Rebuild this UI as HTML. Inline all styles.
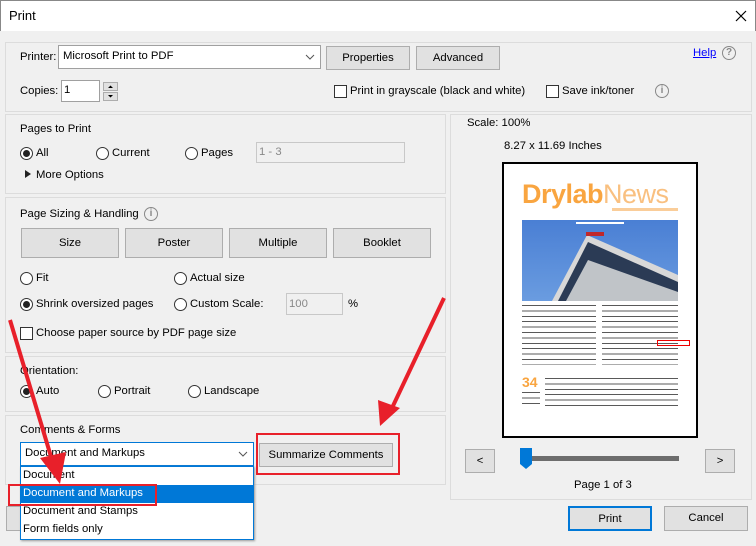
<!DOCTYPE html>
<html><head><style>
*{margin:0;padding:0;box-sizing:border-box}
body{width:756px;height:546px;background:#f0f0f0;font-family:"Liberation Sans",sans-serif;font-size:11.3px;color:#000;position:relative;overflow:hidden}
.a{position:absolute}
.p{position:absolute;border:1px solid #dcdcdc;background:#f0f0f0}
.btn{position:absolute;background:#e1e1e1;border:1px solid #adadad;text-align:center;font-size:11.3px}
.rad{position:absolute;width:13px;height:13px;border:1px solid #333;border-radius:50%;background:#fff}
.rad.on::after{content:"";position:absolute;left:2px;top:2px;width:7px;height:7px;border-radius:50%;background:#222}
.chk{position:absolute;width:13px;height:13px;border:1px solid #333;background:#fff}
.inp{position:absolute;background:#fff;border:1px solid #a0a0a0}
.dis{position:absolute;background:#f0f0f0;border:1px solid #c8c8c8;color:#888;padding-left:2px}
.t{position:absolute;white-space:nowrap}
.lines{position:absolute;background:repeating-linear-gradient(#222 0 1px,#fff 1px 3px,#fff 3px 5.4px);opacity:.75}
.ic{position:absolute;width:14px;height:14px;border:1.5px solid #888;border-radius:50%;color:#888;font-size:10px;text-align:center;line-height:11px;font-weight:bold}
</style></head><body>
<div class="a" style="left:0;top:0;width:756px;height:31px;background:#fff;border-left:1px solid #888;border-top:1px solid #888;border-right:1px solid #888"></div>
<div class="t" style="left:9px;top:8px;font-size:13px">Print</div>
<svg class="a" style="left:735px;top:10px" width="12" height="12"><path d="M1 1L11 11M11 1L1 11" stroke="#000" stroke-width="1.2"/></svg>

<div class="p" style="left:5px;top:42px;width:747px;height:70px"></div>
<div class="t" style="left:20px;top:51px">Printer:</div>
<div class="inp" style="left:58px;top:45px;width:263px;height:24px"></div>
<div class="t" style="left:63px;top:50px">Microsoft Print to PDF</div>
<svg class="a" style="left:305px;top:53px" width="10" height="8"><path d="M1 2L5 6L9 2" stroke="#555" fill="none"/></svg>
<div class="btn" style="left:326px;top:46px;width:84px;height:24px;line-height:22px">Properties</div>
<div class="btn" style="left:416px;top:46px;width:84px;height:24px;line-height:22px">Advanced</div>
<div class="t" style="left:693px;top:47px;color:#00f;text-decoration:underline">Help</div>
<div class="ic" style="left:722px;top:46px">?</div>
<div class="t" style="left:20px;top:85px">Copies:</div>
<div class="inp" style="left:61px;top:80px;width:39px;height:22px"></div>
<div class="t" style="left:64px;top:84px">1</div>
<div class="btn" style="left:103px;top:82px;width:15px;height:9px"></div>
<div class="btn" style="left:103px;top:92px;width:15px;height:9px"></div>
<svg class="a" style="left:106px;top:84px" width="9" height="16"><path d="M2 4L4.5 1.5L7 4Z M2 11L4.5 13.5L7 11Z" fill="#000"/></svg>
<div class="chk" style="left:334px;top:85px"></div>
<div class="t" style="left:350px;top:85px">Print in grayscale (black and white)</div>
<div class="chk" style="left:546px;top:85px"></div>
<div class="t" style="left:562px;top:85px">Save ink/toner</div>
<div class="ic" style="left:655px;top:84px">i</div>

<div class="p" style="left:5px;top:114px;width:441px;height:80px"></div>
<div class="t" style="left:20px;top:123px">Pages to Print</div>
<div class="rad on" style="left:20px;top:147px"></div><div class="t" style="left:36px;top:147px">All</div>
<div class="rad" style="left:96px;top:147px"></div><div class="t" style="left:112px;top:147px">Current</div>
<div class="rad" style="left:185px;top:147px"></div><div class="t" style="left:201px;top:147px">Pages</div>
<div class="dis" style="left:256px;top:142px;width:149px;height:21px;line-height:19px">1 - 3</div>
<svg class="a" style="left:25px;top:170px" width="6" height="8"><path d="M0 0L6 4L0 8Z" fill="#222"/></svg>
<div class="t" style="left:36px;top:169px">More Options</div>

<div class="p" style="left:5px;top:197px;width:441px;height:156px"></div>
<div class="t" style="left:20px;top:208px">Page Sizing &amp; Handling</div>
<div class="ic" style="left:144px;top:207px">i</div>
<div class="btn" style="left:21px;top:228px;width:98px;height:30px;line-height:28px">Size</div>
<div class="btn" style="left:125px;top:228px;width:98px;height:30px;line-height:28px">Poster</div>
<div class="btn" style="left:229px;top:228px;width:98px;height:30px;line-height:28px">Multiple</div>
<div class="btn" style="left:333px;top:228px;width:98px;height:30px;line-height:28px">Booklet</div>
<div class="rad" style="left:20px;top:272px"></div><div class="t" style="left:36px;top:272px">Fit</div>
<div class="rad" style="left:174px;top:272px"></div><div class="t" style="left:190px;top:272px">Actual size</div>
<div class="rad on" style="left:20px;top:298px"></div><div class="t" style="left:36px;top:298px">Shrink oversized pages</div>
<div class="rad" style="left:174px;top:298px"></div><div class="t" style="left:190px;top:298px">Custom Scale:</div>
<div class="dis" style="left:286px;top:293px;width:57px;height:22px;line-height:20px">100</div>
<div class="t" style="left:348px;top:298px">%</div>
<div class="chk" style="left:20px;top:327px"></div><div class="t" style="left:36px;top:327px">Choose paper source by PDF page size</div>

<div class="p" style="left:5px;top:356px;width:441px;height:56px"></div>
<div class="t" style="left:20px;top:365px">Orientation:</div>
<div class="rad on" style="left:20px;top:385px"></div><div class="t" style="left:36px;top:385px">Auto</div>
<div class="rad" style="left:98px;top:385px"></div><div class="t" style="left:114px;top:385px">Portrait</div>
<div class="rad" style="left:188px;top:385px"></div><div class="t" style="left:204px;top:385px">Landscape</div>

<div class="p" style="left:5px;top:415px;width:441px;height:70px"></div>
<div class="t" style="left:20px;top:424px">Comments &amp; Forms</div>
<div class="a" style="left:20px;top:442px;width:234px;height:24px;border:1px solid #0078d7;background:#fff"></div>
<div class="t" style="left:25px;top:447px">Document and Markups</div>
<svg class="a" style="left:238px;top:450px" width="10" height="8"><path d="M1 2L5 6L9 2" stroke="#555" fill="none"/></svg>
<div class="btn" style="left:259px;top:443px;width:134px;height:24px;line-height:22px">Summarize Comments</div>
<div class="btn" style="left:6px;top:506px;width:40px;height:25px"></div>
<div class="a" style="left:20px;top:466px;width:234px;height:74px;background:#fff;border:1px solid #0078d7;box-shadow:1px 1px 2px #999"></div>
<div class="t" style="left:23px;top:469px">Document</div>
<div class="a" style="left:21px;top:485px;width:232px;height:18px;background:#0078d7"></div>
<div class="t" style="left:23px;top:487px;color:#fff">Document and Markups</div>
<div class="t" style="left:23px;top:505px">Document and Stamps</div>
<div class="t" style="left:23px;top:523px">Form fields only</div>

<div class="p" style="left:450px;top:114px;width:302px;height:386px"></div>
<div class="t" style="left:467px;top:117px">Scale: 100%</div>
<div class="t" style="left:504px;top:140px">8.27 x 11.69 Inches</div>
<div class="a" style="left:502px;top:162px;width:196px;height:276px;background:#fff;border:2px solid #000"></div>
<div class="t" style="left:522px;top:179px;font-size:27px;font-weight:bold;color:#f9a540;letter-spacing:-0.5px">Drylab<span style="font-weight:normal;color:#f9c080">News</span></div>
<div class="a" style="left:612px;top:208px;width:66px;height:3px;background:#f9c080;opacity:.8"></div>
<div class="a" style="left:522px;top:220px;width:156px;height:81px;background:linear-gradient(#4a7fd4,#6a9ce0)"></div>
<svg class="a" style="left:522px;top:220px" width="156" height="81"><path d="M30 81L65 15L156 55L156 81Z" fill="#d8d8d8"/><path d="M36 81L66 22L156 62L156 81Z" fill="#2b3b55"/><path d="M44 81L66 40L156 72L156 81Z" fill="#c0c4c8"/><rect x="54" y="2" width="48" height="2" fill="#fff"/><rect x="64" y="12" width="18" height="4" fill="#c0282a"/></svg>
<div class="lines" style="left:522px;top:305px;width:74px;height:60px"></div>
<div class="lines" style="left:602px;top:305px;width:76px;height:60px"></div>
<div class="a" style="left:657px;top:340px;width:33px;height:6px;border:1px solid #e00"></div>
<div class="t" style="left:522px;top:374px;font-size:14px;font-weight:bold;color:#f9a540">34</div>
<div class="lines" style="left:522px;top:392px;width:18px;height:16px"></div>
<div class="lines" style="left:545px;top:378px;width:133px;height:30px"></div>

<div class="btn" style="left:465px;top:449px;width:30px;height:24px;line-height:22px">&lt;</div>
<div class="btn" style="left:705px;top:449px;width:30px;height:24px;line-height:22px">&gt;</div>
<div class="a" style="left:522px;top:456px;width:157px;height:5px;background:#6d6d6d"></div>
<svg class="a" style="left:520px;top:448px" width="12" height="21"><path d="M0 0H12V16L6 21L0 16Z" fill="#0078d7"/></svg>
<div class="t" style="left:574px;top:479px">Page 1 of 3</div>
<div class="btn" style="left:568px;top:506px;width:84px;height:25px;line-height:23px;border:2px solid #0078d7">Print</div>
<div class="btn" style="left:664px;top:506px;width:84px;height:25px;line-height:23px">Cancel</div>

<div class="a" style="left:8px;top:484px;width:149px;height:22px;border:2px solid #e8202a"></div>
<div class="a" style="left:256px;top:433px;width:144px;height:42px;border:2px solid #e8202a"></div>
<svg class="a" style="left:0;top:0" width="756" height="546">
<path d="M10 320L52 460" stroke="#e8202a" stroke-width="4"/><path d="M40 458L60 484L66 452Z" fill="#e8202a"/>
<path d="M444 298L392 408" stroke="#e8202a" stroke-width="4"/><path d="M378 400L380 426L400 408Z" fill="#e8202a"/>
</svg>
</body></html>
